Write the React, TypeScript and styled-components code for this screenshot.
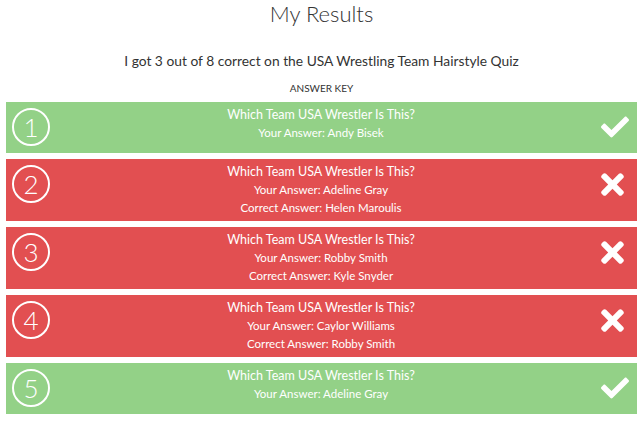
import styled, { createGlobalStyle } from "styled-components";
import { FaCheck, FaTimes } from "react-icons/fa";

type Result = {
  id: number;
  yourAnswer: string;
  correctAnswer?: string;
};

const results: Result[] = [
  { id: 1, yourAnswer: "Andy Bisek" },
  { id: 2, yourAnswer: "Adeline Gray", correctAnswer: "Helen Maroulis" },
  { id: 3, yourAnswer: "Robby Smith", correctAnswer: "Kyle Snyder" },
  { id: 4, yourAnswer: "Caylor Williams", correctAnswer: "Robby Smith" },
  { id: 5, yourAnswer: "Adeline Gray" },
];

function App() {
  return (
    <>
      <GlobalStyle />
      <Page>
        <Title>My Results</Title>
        <Summary>I got 3 out of 8 correct on the USA Wrestling Team Hairstyle Quiz</Summary>
        <KeyLabel>Answer Key</KeyLabel>
        <List>
          {results.map((r) => {
            const correct = !r.correctAnswer;
            return (
              <Row key={r.id} $correct={correct}>
                <Number>{r.id}</Number>
                <Body>
                  <Question>Which Team USA Wrestler Is This?</Question>
                  <Line>Your Answer: {r.yourAnswer}</Line>
                  {r.correctAnswer && <Line>Correct Answer: {r.correctAnswer}</Line>}
                </Body>
                <Mark>{correct ? <FaCheck size={28} /> : <FaTimes size={33} />}</Mark>
              </Row>
            );
          })}
        </List>
      </Page>
    </>
  );
}

export default App;

const GlobalStyle = createGlobalStyle`
  body {
    margin: 0;
    background: #fff;
    font-family: Lato, "Open Sans", sans-serif;
    color: #333;
  }
`;

const Page = styled("div")`
  width: 631px;
  margin: 0 0 0 6px;
  display: flex;
  flex-direction: column;
  align-items: center;
`;

const Title = styled("h1")`
  margin: 0;
  font-size: 22px;
  line-height: 28px;
  font-weight: 300;
  color: #333;
`;

const Summary = styled("p")`
  margin: 23px 0 0;
  font-size: 13.8px;
  line-height: 20px;
  font-weight: 400;
  color: #333;
`;

const KeyLabel = styled("div")`
  margin-top: 11px;
  font-size: 10px;
  line-height: 12px;
  text-transform: uppercase;
  color: #333;
`;

const List = styled("div")`
  width: 100%;
  margin-top: 8px;
  display: flex;
  flex-direction: column;
  gap: 6px;
`;

const Row = styled("div")<{ $correct: boolean }>`
  box-sizing: border-box;
  min-height: 51px;
  display: grid;
  grid-template-columns: 44px 1fr 44px;
  align-items: start;
  padding: 4px 7px 4px 6px;
  background-color: ${(p) => (p.$correct ? "#93d187" : "#e24f51")};
  color: #fff;
`;

const Number = styled("div")`
  width: 38px;
  height: 38px;
  box-sizing: border-box;
  margin-top: 2px;
  border: 2px solid #fff;
  border-radius: 50%;
  display: flex;
  align-items: center;
  justify-content: center;
  font-size: 26px;
  font-weight: 300;
`;

const Body = styled("div")`
  text-align: center;
`;

const Question = styled("div")`
  font-size: 12.5px;
  line-height: 18px;
`;

const Line = styled("div")`
  font-size: 11.5px;
  line-height: 18px;
`;

const Mark = styled("div")`
  height: 42px;
  display: flex;
  align-items: center;
  justify-content: flex-end;
  padding-right: 1px;
`;
